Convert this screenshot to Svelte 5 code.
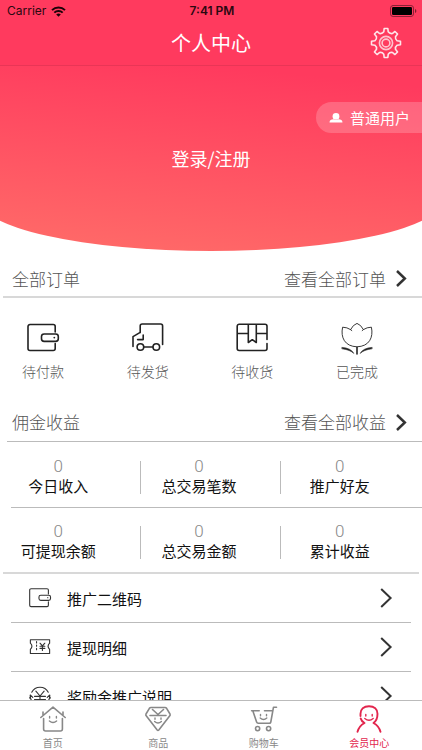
<script>
  const orders = [
    { icon: "wallet", label: "待付款" },
    { icon: "truck", label: "待发货" },
    { icon: "parcel", label: "待收货" },
    { icon: "tulip", label: "已完成" }
  ];

  const stats = [
    [
      { label: "今日收入", value: 0 },
      { label: "总交易笔数", value: 0 },
      { label: "推广好友", value: 0 }
    ],
    [
      { label: "可提现余额", value: 0 },
      { label: "总交易金额", value: 0 },
      { label: "累计收益", value: 0 }
    ]
  ];

  const menu = [
    { icon: "wallet", label: "推广二维码" },
    { icon: "ticket", label: "提现明细" },
    { icon: "yen", label: "奖励金推广说明" }
  ];

  const tabs = [
    { icon: "home", label: "首页" },
    { icon: "gem", label: "商品" },
    { icon: "cart", label: "购物车" },
    { icon: "member", label: "会员中心" }
  ];

  let active = $state("member");

  // outline of the settings cog, centred on 0,0
  function gearPath(teeth, outer, inner) {
    const step = (Math.PI * 2) / teeth;
    const at = (r, a) => `${(r * Math.sin(a)).toFixed(2)} ${(-r * Math.cos(a)).toFixed(2)}`;
    let d = "";
    for (let i = 0; i < teeth; i++) {
      const a = i * step;
      d += `${i ? "L" : "M"}${at(outer, a - step * 0.16)} L${at(outer, a + step * 0.16)} `;
      d += `L${at(inner + 0.6, a + step * 0.25)} Q${at(inner - 1, a + step * 0.5)} ${at(inner + 0.6, a + step * 0.75)} `;
    }
    return d + "Z";
  }
  const gear = gearPath(8, 14.6, 10.8);
</script>

{#snippet chevron(size)}
  <svg class="chevron {size}" viewBox="0 0 12 20" aria-hidden="true">
    <path d="M1.2 1 L10.6 10 L1.2 19" />
  </svg>
{/snippet}

{#snippet wallet()}
  <path d="M28.2 10V4.5a2 2 0 0 0-2-2H3a2 2 0 0 0-2 2v22a2 2 0 0 0 2 2h23.2a2 2 0 0 0 2-2v-5" />
  <rect x="14.5" y="12" width="16.8" height="7.4" rx="2.6" />
  <circle class="dot" cx="27.3" cy="15.6" r="0.9" />
{/snippet}

<div class="page">
  <header>
    <div class="status">
      <span class="carrier">
        Carrier
        <svg class="wifi" viewBox="0 0 15 11" aria-hidden="true">
          <path d="M1 4.1a9.4 9.4 0 0 1 13 0M3.3 6.6a6 6 0 0 1 8.4 0" />
          <path class="tip" d="M5.2 8.5a3.3 3.3 0 0 1 4.6 0L7.5 10.8z" />
        </svg>
      </span>
      <span class="clock">7:41 PM</span>
      <svg class="battery" viewBox="0 0 27 12" aria-hidden="true">
        <rect class="case" x="0.5" y="0.5" width="23" height="11" rx="2.6" />
        <rect x="2" y="2" width="20" height="8" rx="1.2" />
        <path d="M25 4v4q1.4-.6 1.4-2T25 4z" opacity="0.5" />
      </svg>
    </div>
    <div class="nav">
      <h1>个人中心</h1>
      <button class="settings" aria-label="设置">
        <svg viewBox="-16 -16 32 32" aria-hidden="true">
          <path d={gear} />
          <circle r="6.6" opacity="0.8" />
          <circle r="3.9" opacity="0.8" />
        </svg>
      </button>
    </div>
  </header>

  <main>
    <section class="hero">
      <span class="level">
        <svg viewBox="0 0 14 10" aria-hidden="true">
          <ellipse cx="7" cy="3.4" rx="3.4" ry="3.3" />
          <path d="M.5 9.4c0-2.3 1.6-3 4.2-3.2q2.3 1.6 4.6 0c2.6.2 4.2.9 4.2 3.2z" />
        </svg>
        普通用户
      </span>
      <a class="login" href="#login">登录/注册</a>
    </section>

    <section>
      <div class="heading thick">
        <h2>全部订单</h2>
        <a href="#orders">查看全部订单 {@render chevron("small")}</a>
      </div>
      <div class="orders">
        {#each orders as order}
          <a href="#{order.icon}">
            <svg viewBox="0 0 32 32" aria-hidden="true">
              {#if order.icon === "wallet"}
                {@render wallet()}
              {:else if order.icon === "truck"}
                <path d="M1 24.5V14.6L7.8 10.6M8.2 10.6V4a2 2 0 0 1 2-2h18.4a2 2 0 0 1 2 2v18.5M11.2 13v4.6H5.6M11.8 25h9" />
                <circle cx="8.4" cy="25" r="3.3" />
                <circle cx="24.3" cy="25" r="3.3" />
              {:else if order.icon === "parcel"}
                <path d="M31 17.4V4.2a2 2 0 0 0-2-2H3.2a2 2 0 0 0-2 2v22.3a2 2 0 0 0 2 2H29a2 2 0 0 0 2-2v-5M1.2 11.5h10.6M20.6 11.5H31M12.3 2.5v18l4-2.8 4 2.8v-18" />
              {:else}
                <path class="thin" d="M9.6 7.6Q6 5.2 1.6 5.2C-.6 15.5 3.8 24.4 16 24.8C28.2 24.4 32.6 15.5 30.4 5.2Q26 5.2 22.4 7.6Q20 2.800 16 1.4Q12 2.800 9.6 7.6L10.8 8.6M22.4 7.6L21.2 8.6" />
                <path d="M16 25.5V32" />
                <path class="leaf" d="M1.2 25.4q8.6.6 11.6 6q-3.6-3.6-11.6-4.6zM30.8 25.4q-8.6.6-11.6 6q3.6-3.6 11.6-4.6z" />
              {/if}
            </svg>
            {order.label}
          </a>
        {/each}
      </div>
    </section>

    <section>
      <div class="heading earnings">
        <h2>佣金收益</h2>
        <a href="#earnings">查看全部收益 {@render chevron("small")}</a>
      </div>
      <div class="stats">
        {#each stats as row}
          <dl>
            {#each row as stat}
              <div class="stat">
                <dt>{stat.label}</dt>
                <dd>{stat.value}</dd>
              </div>
            {/each}
          </dl>
        {/each}
      </div>
    </section>

    <ul class="menu">
      {#each menu as item}
        <li>
          <a href="#{item.icon}">
            <svg class="icon" viewBox="0 0 32 32" aria-hidden="true">
              {#if item.icon === "wallet"}
                {@render wallet()}
              {:else if item.icon === "ticket"}
                <path d="M2 5.500h28v5q-4.500 4.500 0 9V25.500H2v-6q4.500-4.500 0-9z" />
                <path d="M11 8v15" stroke-dasharray="2 3" />
                <path d="M16 10.500l3.500 4 3.500-4M19.500 14.500V21M16 15h7M16 18h7" />
              {:else}
                <path d="M4 10.500a13.500 13.500 0 0 1 24 0M1.800 14.500q-.4 6 3 9.500M30.200 14.500q.4 6-3 9.500M1 19l1.500-4 3 3M31 19l-1.500-4-3 3" />
                <path d="M10 9l6 7 6-7M8 16.500h16M8 21h16M16 16v11M6 26a13.500 13.500 0 0 0 20 0" />
              {/if}
            </svg>
            <span>{item.label}</span>
            {@render chevron("large")}
          </a>
        </li>
      {/each}
    </ul>
  </main>

  <nav class="tabs">
    {#each tabs as tab}
      <button class:active={active === tab.icon} onclick={() => (active = tab.icon)}>
        <svg viewBox="0 0 26 26" aria-hidden="true">
          {#if tab.icon === "home"}
            <path d="M.8 11.500L13 1.200l12.200 10.300M3 9V6M23 9V6M3.600 12.500V23q0 2 2 2h14.800q2 0 2-2V12.500" />
            <path class="face" d="M9.600 10.500v1.500M16.400 10.500v1.500M9.400 15q3.600 3.200 7.200 0" />
          {:else if tab.icon === "gem"}
            <path d="M6 1.500h14q1 0 1.600.8L25 8q.5 1-.2 1.800L13.800 24q-.8.9-1.600 0L1.200 9.800Q.5 9 1 8l3.400-5.700q.6-.8 1.600-.8zM5 9.500h16M7.500 3.500L13 8.500l5.500-5" />
            <path class="face" d="M10 12v1.200M16 12v1.200M9.600 15.500q3.400 3 6.800 0" />
          {:else if tab.icon === "cart"}
            <path d="M25.500 1.200h-3L19.800 16q-.2 1.200-1.400 1.200H7.200q-1.200 0-1.600-1.200L1.800 4.800M.6 4.800h7.600M13.500 4.800h8" />
            <circle cx="6.600" cy="22.600" r="2.100" />
            <circle cx="17.600" cy="22.600" r="2.100" />
            <path class="face" d="M9.500 8.500v1.300M15.500 8.500v1.300M9.200 12q3.300 2.800 6.600 0" />
          {:else}
            <path d="M4.500 10V7.800C4.500 3.200 7.800.2 13 .2s8.500 3 8.500 7.600c0 4.800-1.200 7.300-4 9.200 3.600 2 6 4.800 7 8.800M4.700 12.500c.5 2 1.700 3.300 3.800 4.500-3.600 2-6 4.800-7 8.800" />
            <path class="face" d="M9.800 8.500v1.500M16.200 8.500v1.500M8.800 12.500q4.200 3.600 8.400 0" />
          {/if}
        </svg>
        {tab.label}
      </button>
    {/each}
  </nav>
</div>

<style>
  :global(body) {
    margin: 0;
    background: #fff;
  }
  .page {
    display: flex;
    flex-direction: column;
    height: 100vh;
    overflow: hidden;
    font-family: "Noto Sans CJK SC", sans-serif;
    font-weight: 300;
    color: #111;
  }
  a {
    color: inherit;
    text-decoration: none;
  }
  button {
    padding: 0;
    border: 0;
    background: none;
    font: inherit;
    cursor: pointer;
  }
  h1, h2, dl, dd, ul {
    margin: 0;
    padding: 0;
    font-weight: inherit;
  }
  svg {
    display: block;
    flex: none;
    overflow: visible;
    fill: none;
    stroke: currentColor;
    stroke-linecap: round;
    stroke-linejoin: round;
  }

  header {
    flex: none;
    background: #ff3a5e;
    border-bottom: 1px solid #e93556;
  }
  .status, .nav {
    display: grid;
    grid-template-columns: 1fr auto 1fr;
    align-items: center;
  }
  .status {
    height: 22px;
    padding: 0 5px 0 7px;
    font: 400 12px/22px Inter, sans-serif;
    color: #2a0810;
  }
  .carrier {
    display: flex;
    align-items: center;
    gap: 5px;
  }
  .wifi {
    width: 15px;
    height: 11px;
    stroke: #1a0208;
    stroke-width: 2;
    stroke-linecap: butt;
  }
  .wifi .tip {
    fill: #1a0208;
    stroke: none;
  }
  .clock {
    font-weight: 600;
  }
  .battery {
    width: 27px;
    height: 12px;
    justify-self: end;
    fill: #000;
    stroke: none;
  }
  .battery .case {
    fill: none;
    stroke: #8c2036;
  }
  .nav {
    height: 41px;
    padding-bottom: 2px;
    color: #fff;
  }
  h1 {
    grid-column: 2;
    font-size: 20px;
    font-weight: 400;
    line-height: 41px;
  }
  .settings {
    justify-self: end;
    margin-right: 20px;
    color: #ffe6ea;
  }
  .settings svg {
    width: 32px;
    height: 32px;
    stroke-width: 1.6;
  }

  main {
    flex: 1;
    min-height: 0;
    overflow-y: auto;
    scrollbar-width: none;
  }
  .hero {
    position: relative;
    z-index: 0;
    display: flex;
    flex-direction: column;
    align-items: center;
    height: 185px;
    overflow: hidden;
    color: #fff;
  }
  /* wider than the screen so only the flat part of the arc shows */
  .hero::before {
    content: "";
    position: absolute;
    inset: 0 -5%;
    z-index: -1;
    border-radius: 0 0 50% 50% / 0 0 52px 52px;
    background: linear-gradient(186deg, #ff3a5e 10%, #ff6a68 95%);
  }
  .level {
    display: flex;
    align-items: center;
    gap: 7px;
    align-self: flex-end;
    margin-top: 36px;
    padding: 0 12px 0 13px;
    border-radius: 16px 0 0 16px;
    background: rgba(255, 255, 255, 0.2);
    font-size: 15px;
    font-weight: 400;
    line-height: 31px;
  }
  .level svg {
    width: 14px;
    height: 10px;
    fill: #fff;
    stroke: none;
  }
  .login {
    margin-top: 11px;
    font-size: 18px;
    font-weight: 400;
    line-height: 28px;
  }

  .heading {
    display: flex;
    justify-content: space-between;
    margin-left: 7px;
    padding: 14px 16px 4px 5px;
    border-bottom: 1px solid #bbb;
    font-size: 17px;
    line-height: 27px;
    color: #555;
  }
  .heading.thick {
    margin-left: 3px;
    padding-left: 9px;
    border-bottom: 2px solid #d8d8d8;
  }
  .heading h2 {
    font-size: inherit;
  }
  .heading a {
    display: flex;
    align-items: center;
    gap: 10px;
  }
  .chevron {
    stroke: #333;
    stroke-linecap: butt;
    stroke-linejoin: miter;
    stroke-width: 2;
  }
  .chevron.small {
    width: 10px;
    height: 17px;
    stroke-width: 3;
  }
  .chevron.large {
    width: 12px;
    height: 20px;
  }

  .orders {
    display: flex;
    justify-content: space-between;
    padding: 24px 43px 15px 21px;
    font-size: 14px;
    line-height: 20px;
    color: #555;
  }
  .orders a {
    display: flex;
    flex-direction: column;
    align-items: center;
    gap: 7px;
    width: 44px;
  }
  .orders svg {
    width: 32px;
    height: 32px;
    color: #222;
    stroke-width: 1.6;
  }
  .thin {
    stroke-width: 0.9;
  }
  .dot, .leaf {
    fill: currentColor;
    stroke: none;
  }
  .leaf {
    stroke: currentColor;
    stroke-width: 0.6;
  }

  .heading.earnings {
    padding-top: 13px;
    padding-bottom: 6px;
    line-height: 26px;
  }
  .stats {
    padding-top: 1px;
  }
  .stats dl {
    display: grid;
    grid-template-columns: repeat(3, 1fr);
    padding: 13px 0 11px;
  }
  .stats dl::after {
    content: "";
    grid-column: 1 / -1;
    margin: 11px 0 -11px 11px;
    border-bottom: 1px solid #bbb;
  }
  .stats dl:last-child::after {
    margin-right: 3px;
    margin-left: 3px;
    border-bottom: 2px solid #d8d8d8;
  }
  .stat {
    display: flex;
    flex-direction: column-reverse;
    padding-right: 24px;
    text-align: center;
    line-height: 20px;
    background: linear-gradient(#bbb, #bbb) right bottom 2px / 1px 33px no-repeat;
  }
  .stat:last-child {
    background: none;
  }
  .stat dt {
    font-size: 15px;
    font-weight: 400;
    white-space: nowrap;
  }
  .stat dd {
    font: 300 17px/20px Roboto, sans-serif;
    color: #888;
  }

  .menu {
    list-style: none;
  }
  .menu li {
    margin: 0 11px;
    border-bottom: 1px solid #bbb;
  }
  .menu a {
    display: flex;
    align-items: center;
    gap: 16px;
    height: 48px;
    padding: 0 19px 0 18px;
    font-size: 15px;
    font-weight: 400;
  }
  .menu span {
    flex: 1;
  }
  .menu .icon {
    width: 22px;
    height: 22px;
    color: #333;
    stroke-width: 1.6;
  }

  .tabs {
    flex: none;
    display: grid;
    grid-template-columns: repeat(4, 1fr);
    border-top: 1px solid #bbb;
    background: #fff;
  }
  .tabs button {
    display: flex;
    flex-direction: column;
    align-items: center;
    gap: 4px;
    height: 49px;
    padding-top: 5px;
    font-size: 10px;
    font-weight: 400;
    line-height: 14px;
    color: #888;
  }
  .tabs button.active {
    color: #e2264d;
  }
  .tabs svg {
    width: 26px;
    height: 26px;
    stroke-width: 1.6;
  }
  .tabs .active svg {
    stroke-width: 1.9;
  }
  .face {
    stroke-width: 1.4;
  }
</style>
